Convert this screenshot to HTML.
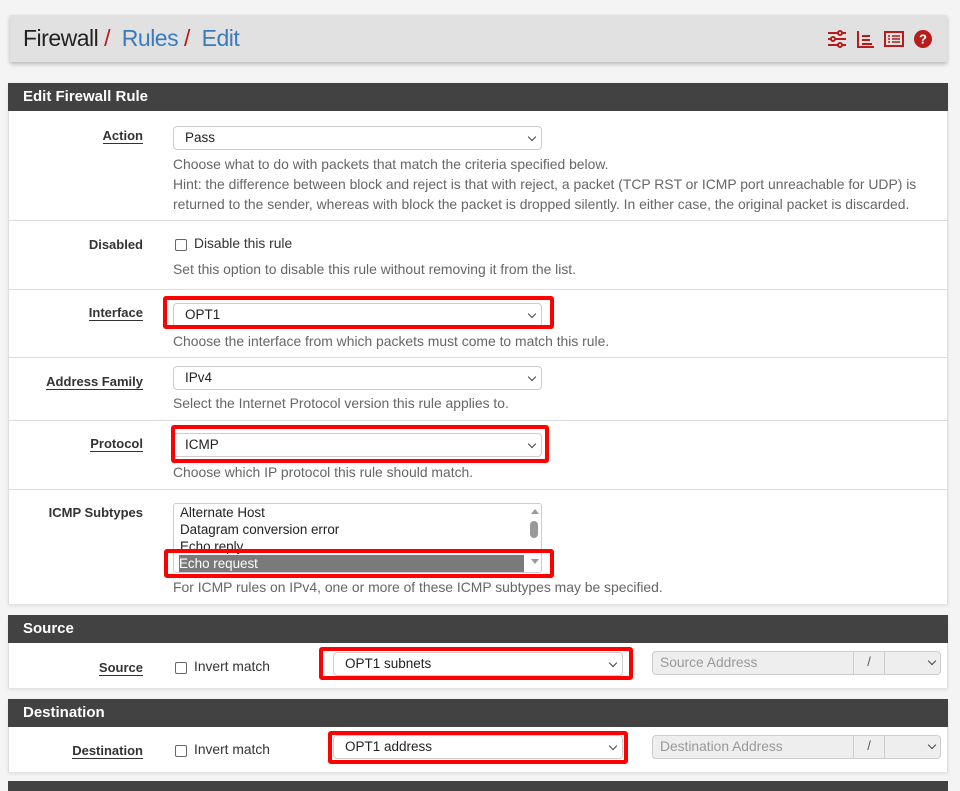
<!DOCTYPE html>
<html><head><meta charset="utf-8"><style>
*{box-sizing:border-box;margin:0;padding:0}
body{width:960px;height:789px;overflow:hidden;background:#f4f4f4;font-family:"Liberation Sans",sans-serif;position:relative;color:#333}
.a{position:absolute}
.hdr{left:10px;top:15px;width:937px;height:47px;background:#e1e1e1;box-shadow:0 2px 4px rgba(0,0,0,.25)}
.crumb{left:23px;top:25px;font-size:23px;letter-spacing:-0.5px;color:#222;white-space:nowrap}
.crumb .s{color:#b71c1c}.crumb .l{color:#3a7bbf}
.panel{left:8px;width:940px;background:#fff;border-left:1px solid #ddd;border-right:1px solid #ddd;box-shadow:0 2px 3px rgba(0,0,0,.08)}
.bar{left:8px;width:940px;height:28px;background:#424242;color:#fff;font-weight:bold;font-size:15px;padding:5px 0 0 15px}
.row{left:9px;width:938px;border-bottom:1px solid #ddd}
.lbl{font-weight:bold;font-size:13px;color:#333;text-align:right;width:143px;left:0}
.lbl u{text-decoration:none;border-bottom:1px solid #333}
.sel{height:24px;border:1px solid #ccc;border-radius:4px;background:#fff;font-size:13.5px;padding:3px 0 0 11px;color:#222}
.sel:after{content:"";position:absolute;right:6px;top:7px;width:5px;height:5px;border-right:1.6px solid #444;border-bottom:1.6px solid #444;transform:rotate(45deg)}
.help{font-size:13.9px;color:#666;line-height:20px;white-space:nowrap}
.red{border:4px solid #f00;border-radius:3px}
.cb{width:12px;height:12px;border:1px solid #666;border-radius:2px;background:#fff}
.t13{font-size:13.8px;color:#333;white-space:nowrap}
.addr{height:24px;border:1px solid #ccc;border-radius:4px;background:#eee;font-size:13.8px;color:#999;padding:3px 0 0 7px}
</style></head><body>
<div class="a hdr"></div>
<div class="a crumb">Firewall <span class="s">/</span> &nbsp;<span class="l">Rules</span> <span class="s">/</span> &nbsp;<span class="l">Edit</span></div>
<svg class="a" style="left:826px;top:28px" width="110" height="22" viewBox="0 0 110 22">
<g stroke="#b71c1c" stroke-width="2" fill="none">
<path d="M2 5h18M2 11h18M2 17h18"/><circle cx="14" cy="5" r="2" fill="#fff"/><circle cx="7" cy="11" r="2" fill="#fff"/><circle cx="14" cy="17" r="2" fill="#fff"/>
<path d="M32 3v16h16M36 8h8M36 12h8M36 16h10"/>
<rect x="59" y="4" width="18" height="14"/><path d="M62 8h2M66 8h8M62 11h2M66 11h8M62 14h2M66 14h8" stroke-width="1.5"/>
</g>
<circle cx="97" cy="11" r="9" fill="#b71c1c"/><text x="97" y="15.5" text-anchor="middle" fill="#fff" font-size="13" font-weight="bold" font-family="Liberation Sans">?</text>
</svg>

<div class="a panel" style="top:83px;height:521px"></div>
<div class="a bar" style="top:83px">Edit Firewall Rule</div>

<div class="a row" style="top:111px;height:110px"></div>
<div class="a lbl" style="top:128px;left:0"><u>Action</u></div>
<div class="a sel" style="left:173px;top:126px;width:369px">Pass</div>
<div class="a help" style="left:173px;top:154px">Choose what to do with packets that match the criteria specified below.<br>Hint: the difference between block and reject is that with reject, a packet (TCP RST or ICMP port unreachable for UDP) is<br>returned to the sender, whereas with block the packet is dropped silently. In either case, the original packet is discarded.</div>

<div class="a row" style="top:221px;height:69px"></div>
<div class="a lbl" style="top:237px">Disabled</div>
<div class="a cb" style="left:175px;top:239px"></div>
<div class="a t13" style="left:194px;top:236px">Disable this rule</div>
<div class="a help" style="left:173px;top:259px">Set this option to disable this rule without removing it from the list.</div>

<div class="a row" style="top:290px;height:68px"></div>
<div class="a lbl" style="top:305px"><u>Interface</u></div>
<div class="a sel" style="left:173px;top:303px;width:369px">OPT1</div>
<div class="a red" style="left:163px;top:296px;width:391px;height:33px"></div>
<div class="a help" style="left:173px;top:331px">Choose the interface from which packets must come to match this rule.</div>

<div class="a row" style="top:358px;height:63px"></div>
<div class="a lbl" style="top:374px"><u>Address Family</u></div>
<div class="a sel" style="left:173px;top:366px;width:369px">IPv4</div>
<div class="a help" style="left:173px;top:393px">Select the Internet Protocol version this rule applies to.</div>

<div class="a row" style="top:421px;height:69px"></div>
<div class="a lbl" style="top:436px"><u>Protocol</u></div>
<div class="a sel" style="left:173px;top:433px;width:369px">ICMP</div>
<div class="a red" style="left:171px;top:425px;width:378px;height:38px"></div>
<div class="a help" style="left:173px;top:462px">Choose which IP protocol this rule should match.</div>

<div class="a lbl" style="top:505px">ICMP Subtypes</div>
<div class="a" style="left:173px;top:503px;width:369px;height:70px;border:1px solid #ccc;border-radius:3px;background:#fff;overflow:hidden;font-size:13.4px;color:#222;line-height:17px;padding:0 0 0 6px">Alternate Host<br>Datagram conversion error<br>Echo reply<br><span style="display:block;background:#7a7a7a;color:#fff;margin-left:-1px;width:345px">Echo request</span></div>
<div class="a" style="left:531px;top:509px;border:4px solid transparent;border-bottom:5px solid #999;border-top:0"></div>
<div class="a" style="left:530px;top:521px;width:8px;height:17px;border-radius:4px;background:#999"></div>
<div class="a" style="left:531px;top:559px;border:4px solid transparent;border-top:5px solid #999;border-bottom:0"></div>
<div class="a red" style="left:164px;top:549px;width:390px;height:29px"></div>
<div class="a help" style="left:173px;top:577px">For ICMP rules on IPv4, one or more of these ICMP subtypes may be specified.</div>

<div class="a panel" style="top:615px;height:73px"></div>
<div class="a bar" style="top:615px">Source</div>
<div class="a lbl" style="top:660px"><u>Source</u></div>
<div class="a cb" style="left:175px;top:662px"></div>
<div class="a t13" style="left:194px;top:659px">Invert match</div>
<div class="a sel" style="left:333px;top:652px;width:290px">OPT1 subnets</div>
<div class="a red" style="left:319px;top:647px;width:314px;height:33px"></div>
<div class="a addr" style="left:652px;top:651px;width:289px">Source Address</div>
<div class="a" style="left:853px;top:651px;width:32px;height:24px;border-left:1px solid #ccc;border-right:1px solid #ccc;font-size:13px;color:#555;text-align:center;padding-top:3px">/</div>
<div class="a sel" style="left:884px;top:651px;width:57px;background:transparent;border:none"></div>

<div class="a panel" style="top:699px;height:73px"></div>
<div class="a bar" style="top:699px">Destination</div>
<div class="a lbl" style="top:743px"><u>Destination</u></div>
<div class="a cb" style="left:175px;top:745px"></div>
<div class="a t13" style="left:194px;top:742px">Invert match</div>
<div class="a sel" style="left:333px;top:735px;width:290px">OPT1 address</div>
<div class="a red" style="left:328px;top:731px;width:300px;height:33px"></div>
<div class="a addr" style="left:652px;top:735px;width:289px">Destination Address</div>
<div class="a" style="left:853px;top:735px;width:32px;height:24px;border-left:1px solid #ccc;border-right:1px solid #ccc;font-size:13px;color:#555;text-align:center;padding-top:3px">/</div>
<div class="a sel" style="left:884px;top:735px;width:57px;background:transparent;border:none"></div>

<div class="a bar" style="top:781px;height:10px"></div>
</body></html>
